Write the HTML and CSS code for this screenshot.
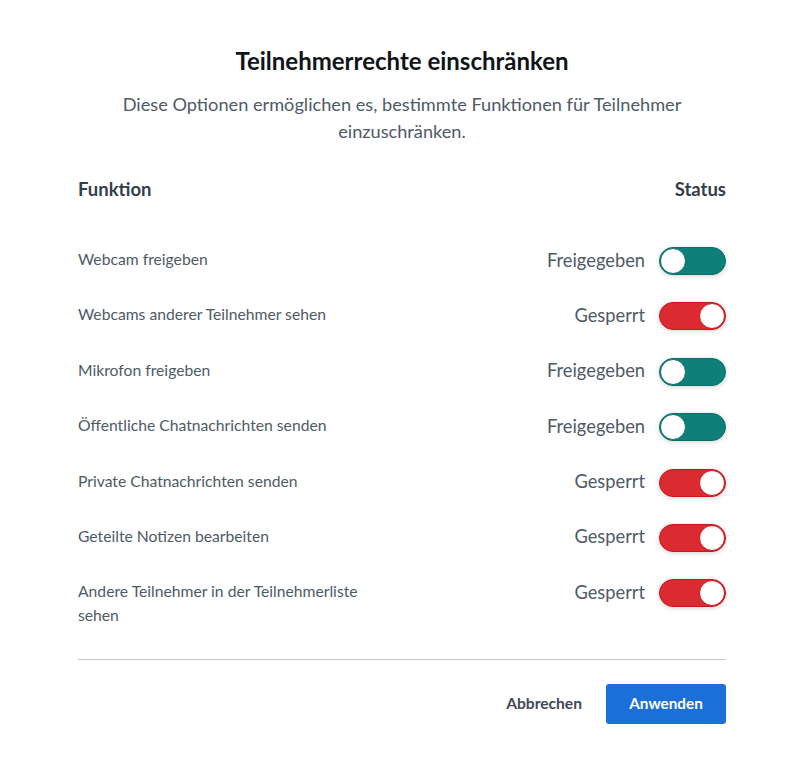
FILE: index.html
```html
<!DOCTYPE html>
<html lang="de">
<head>
<meta charset="utf-8">
<title>Teilnehmerrechte einschränken</title>
<link rel="stylesheet" href="styles.css">
</head>
<body>
<div class="dialog">
  <h1 class="title">Teilnehmerrechte einschränken</h1>
  <p class="subtitle">Diese Optionen ermöglichen es, bestimmte Funktionen für Teilnehmer einzuschränken.</p>
  <div class="table-head">
    <span>Funktion</span>
    <span>Status</span>
  </div>
  <div class="rows">
    <div class="row">
      <div class="label">Webcam freigeben</div>
      <div class="status"><span class="status-text">Freigegeben</span><span class="toggle on"><span class="knob"></span></span></div>
    </div>
    <div class="row">
      <div class="label">Webcams anderer Teilnehmer sehen</div>
      <div class="status"><span class="status-text">Gesperrt</span><span class="toggle off"><span class="knob"></span></span></div>
    </div>
    <div class="row">
      <div class="label">Mikrofon freigeben</div>
      <div class="status"><span class="status-text">Freigegeben</span><span class="toggle on"><span class="knob"></span></span></div>
    </div>
    <div class="row">
      <div class="label">Öffentliche Chatnachrichten senden</div>
      <div class="status"><span class="status-text">Freigegeben</span><span class="toggle on"><span class="knob"></span></span></div>
    </div>
    <div class="row">
      <div class="label">Private Chatnachrichten senden</div>
      <div class="status"><span class="status-text">Gesperrt</span><span class="toggle off"><span class="knob"></span></span></div>
    </div>
    <div class="row">
      <div class="label">Geteilte Notizen bearbeiten</div>
      <div class="status"><span class="status-text">Gesperrt</span><span class="toggle off"><span class="knob"></span></span></div>
    </div>
    <div class="row">
      <div class="label">Andere Teilnehmer in der Teilnehmerliste sehen</div>
      <div class="status"><span class="status-text">Gesperrt</span><span class="toggle off"><span class="knob"></span></span></div>
    </div>
  </div>
  <div class="divider"></div>
  <div class="actions">
    <button class="btn-cancel">Abbrechen</button>
    <button class="btn-apply">Anwenden</button>
  </div>
</div>
</body>
</html>
```
FILE: styles.css
```css
html, body {
  margin: 0;
  padding: 0;
  background: #ffffff;
}
body {
  font-family: Lato, "Noto Sans", sans-serif;
  color: #4e5a66;
}
.dialog {
  width: 648px;
  margin: 0 auto;
  padding-top: 46px;
}
.title {
  margin: 0;
  text-align: center;
  font-size: 24px;
  line-height: 30px;
  font-weight: 700;
  color: #0f1419;
}
.subtitle {
  margin: 15px 0 0;
  text-align: center;
  font-size: 18.2px;
  line-height: 27px;
  color: #4e5a66;
  padding: 0 30px;
}
.table-head {
  margin-top: 32px;
  display: flex;
  justify-content: space-between;
  font-size: 18.5px;
  line-height: 24px;
  font-weight: 700;
  color: #333e4b;
}
.rows {
  margin-top: 46px;
  display: flex;
  flex-direction: column;
  gap: 27.4px;
}
.row {
  display: flex;
  justify-content: space-between;
  align-items: flex-start;
}
.label {
  max-width: 310px;
  font-size: 15.7px;
  line-height: 24px;
  color: #4e5a66;
}
.status {
  display: flex;
  align-items: center;
  gap: 14px;
  height: 28px;
}
.status-text {
  font-size: 18.3px;
  line-height: 24px;
  padding-bottom: 3px;
  color: #4e5a66;
}
.toggle {
  position: relative;
  box-sizing: border-box;
  width: 67px;
  height: 28px;
  border-radius: 14px;
  box-shadow: 0 1px 5px rgba(0, 0, 0, 0.18);
}
.toggle.on {
  background: #0f7f7a;
  border: 1px solid #0d6e69;
}
.toggle.off {
  background: #dc2b30;
  border: 1px solid #c8161c;
}
.knob {
  position: absolute;
  top: 0;
  box-sizing: border-box;
  width: 26px;
  height: 26px;
  border-radius: 50%;
  background: #ffffff;
}
.toggle.on .knob {
  left: 0;
  border: 1.5px solid #0d6e69;
}
.toggle.off .knob {
  right: 0;
  border: 1.5px solid #c8161c;
}
.divider {
  margin-top: 32px;
  height: 1px;
  background: #c3c8cd;
}
.actions {
  margin-top: 24px;
  display: flex;
  justify-content: flex-end;
  align-items: center;
  gap: 24px;
}
.btn-cancel {
  border: none;
  background: none;
  padding: 0 0 2px;
  font-family: inherit;
  font-size: 15.6px;
  font-weight: 700;
  color: #3f4a55;
}
.btn-apply {
  width: 120px;
  height: 40px;
  border: none;
  border-radius: 3px;
  background: #1b6fd6;
  color: #ffffff;
  font-family: inherit;
  font-size: 15.3px;
  font-weight: 700;
  padding: 0 0 2px;
}
```
